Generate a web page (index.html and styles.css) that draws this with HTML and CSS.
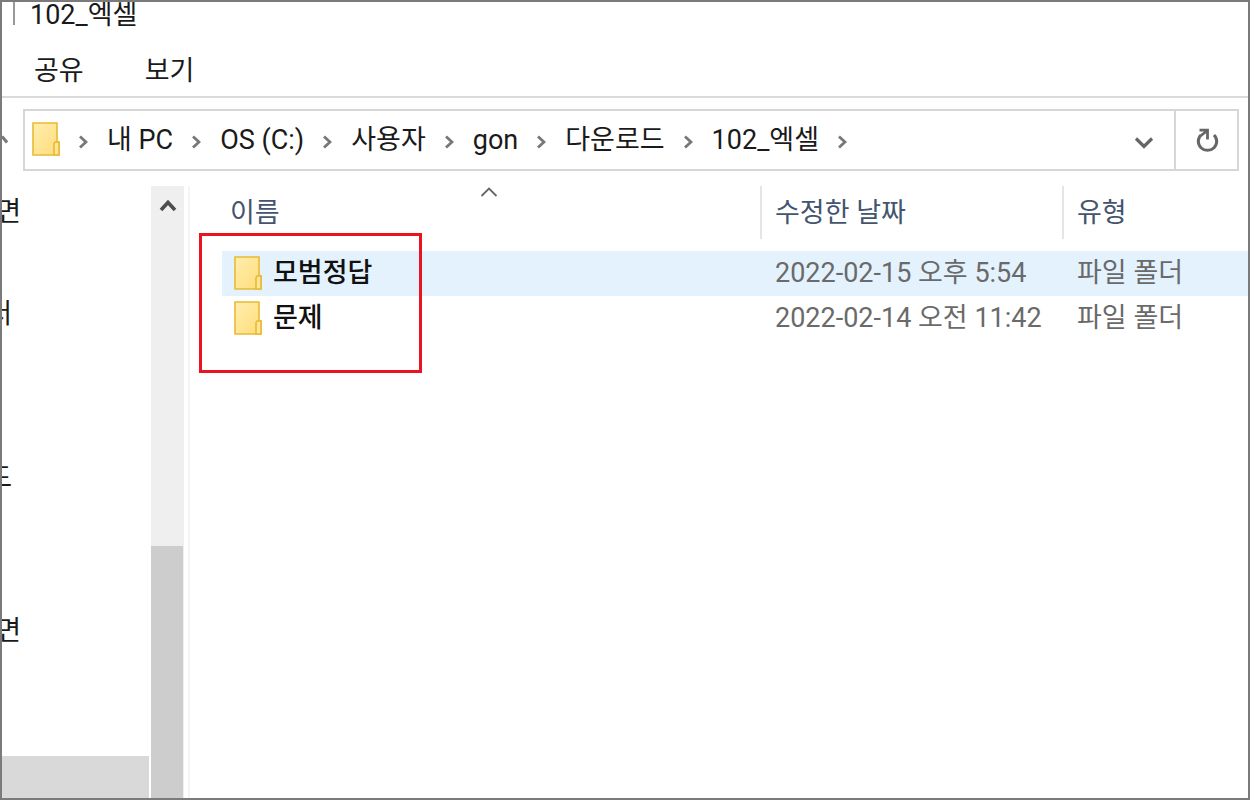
FILE: index.html
```
<!DOCTYPE html>
<html lang="ko">
<head>
<meta charset="utf-8">
<title>102_엑셀</title>
<link rel="stylesheet" href="styles.css">
</head>
<body>
<svg class="defs" width="0" height="0" aria-hidden="true">
  <defs>
    <linearGradient id="paper" x1="0" y1="0" x2="1" y2="1">
      <stop offset="0" stop-color="#ffeeb0"/>
      <stop offset="1" stop-color="#ffdc79"/>
    </linearGradient>
    <symbol id="folder" viewBox="0 0 28 34">
      <path d="M1 1H25V20H27V33H1Z" fill="url(#paper)" stroke="#e8bb35" stroke-width="1.6"/>
      <path d="M25 20H23L22 22V33H27V20Z" fill="#ffe594" stroke="#e8bb35" stroke-width="1.6"/>
    </symbol>
    <symbol id="next" viewBox="0 0 10 14">
      <path d="M2 1.5L8 7L2 12.5" fill="none" stroke="#777" stroke-width="2.8"/>
    </symbol>
  </defs>
</svg>
<main class="window">
  <header class="titlebar"><span class="title">102_엑셀</span></header>
  <nav class="tabs">
    <button type="button">공유</button>
    <button type="button">보기</button>
  </nav>
  <div class="location">
    <svg class="recent" width="6" height="12" viewBox="0 0 6 12" aria-hidden="true"><path d="M0 2.5L5 8.5" fill="none" stroke="#777" stroke-width="3"/></svg>
    <div class="address">
      <nav class="crumbs" aria-label="경로">
        <svg class="folder" aria-hidden="true"><use href="#folder"/></svg>
        <svg class="next" aria-hidden="true"><use href="#next"/></svg>
        <button type="button">내 PC</button>
        <svg class="next" aria-hidden="true"><use href="#next"/></svg>
        <button type="button">OS (C:)</button>
        <svg class="next" aria-hidden="true"><use href="#next"/></svg>
        <button type="button">사용자</button>
        <svg class="next" aria-hidden="true"><use href="#next"/></svg>
        <button type="button">gon</button>
        <svg class="next" aria-hidden="true"><use href="#next"/></svg>
        <button type="button">다운로드</button>
        <svg class="next" aria-hidden="true"><use href="#next"/></svg>
        <button type="button">102_엑셀</button>
        <svg class="next" aria-hidden="true"><use href="#next"/></svg>
      </nav>
      <button type="button" class="history" aria-label="이전 위치">
        <svg width="20" height="14" viewBox="0 0 20 14"><path d="M2 2.5L10 10.5L18 2.5" fill="none" stroke="#666" stroke-width="3.2"/></svg>
      </button>
      <button type="button" class="refresh" aria-label="새로 고침">
        <svg width="24" height="26" viewBox="0 0 24 26"><path d="M19 8A9.200 9 0 1 1 6 8" fill="none" stroke="#666" stroke-width="3"/><path d="M4.500 3.200H12.500V12.500M12.500 3.500L6 8.500" fill="none" stroke="#666" stroke-width="2.800"/></svg>
      </button>
    </div>
  </div>
  <div class="body">
    <aside class="tree">
      <ul>
        <li>면</li>
        <li class="skip-one">서</li>
        <li class="skip-group">드</li>
        <li class="skip-two">면</li>
        <li class="skip-two selected"></li>
      </ul>
    </aside>
    <div class="scrollbar">
      <button type="button" aria-label="위로 스크롤">
        <svg width="18" height="14" viewBox="0 0 18 14"><path d="M2 12L9 4.500L16 12" fill="none" stroke="#4d4d4d" stroke-width="3.600"/></svg>
      </button>
      <div class="thumb"></div>
    </div>
    <section class="files">
      <table>
        <colgroup><col class="col-name"><col class="col-date"><col></colgroup>
        <thead>
          <tr>
            <th scope="col"><div class="head">이름<svg class="sort" width="18" height="12" viewBox="0 0 18 12" aria-hidden="true"><path d="M1.500 10L9 2.500L16.500 10" fill="none" stroke="#666" stroke-width="1.800"/></svg></div></th>
            <th scope="col"><div class="head divided">수정한 날짜</div></th>
            <th scope="col"><div class="head divided">유형</div></th>
          </tr>
        </thead>
        <tbody>
          <tr class="hover">
            <td class="name"><div class="entry"><svg class="folder" aria-hidden="true"><use href="#folder"/></svg>모범정답</div></td>
            <td>2022-02-15 오후 5:54</td>
            <td>파일 폴더</td>
          </tr>
          <tr>
            <td class="name"><div class="entry"><svg class="folder" aria-hidden="true"><use href="#folder"/></svg>문제</div></td>
            <td>2022-02-14 오전 11:42</td>
            <td>파일 폴더</td>
          </tr>
        </tbody>
      </table>
      <div class="highlight"></div>
    </section>
  </div>
</main>
</body>
</html>
```
FILE: styles.css
```
* { box-sizing: border-box; }
body {
  margin: 0;
  background: #fff;
  color: #1a1a1a;
  font: 27px/32px Roboto, "Noto Sans CJK KR", sans-serif;
}
button {
  padding: 0;
  border: 0;
  background: none;
  color: inherit;
  font: inherit;
  white-space: nowrap;
}
svg { display: block; flex: none; }
ul { margin: 0; padding: 0; list-style: none; }
.defs { position: absolute; }
.window {
  display: flex;
  flex-direction: column;
  height: 100vh;
  overflow: hidden;
  border: 2px solid #7b7b7b;
}
.titlebar {
  display: flex;
  align-items: flex-start;
  height: 26px;
  padding-left: 11px;
}
.title {
  height: 23px;
  padding-left: 15px;
  border-left: 2px solid #999;
  line-height: 26px;
}
.tabs {
  display: flex;
  gap: 61px;
  height: 70px;
  padding: 27px 32px 0;
  border-bottom: 2px solid #d9dadb;
}
.tabs button { height: 32px; }
.location {
  display: flex;
  align-items: center;
  gap: 15px;
  padding: 11px 9px 0 0;
}
.address {
  display: flex;
  flex: 1;
  height: 62px;
  border: 2px solid #d6d6d6;
}
.crumbs {
  display: flex;
  flex: 1;
  align-items: center;
  gap: 18px;
  padding-left: 7px;
}
.folder { width: 28px; height: 34px; }
.crumbs .folder { margin-bottom: 2px; }
.next { width: 10px; height: 14px; margin: 3px 1px 0 0; }
.history {
  display: grid;
  place-items: center;
  width: 60px;
  padding-top: 5px;
}
.refresh {
  display: grid;
  place-items: center;
  width: 63px;
  border-left: 2px solid #d6d6d6;
}
.body {
  display: flex;
  flex: 1;
  min-height: 0;
  padding-top: 15px;
}
.tree { width: 147px; overflow: hidden; }
.tree ul { margin-top: -2px; }
.tree li {
  display: flex;
  align-items: center;
  justify-content: flex-end;
  width: 19px;
  height: 51px;
  padding-top: 4px;
}
.tree .skip-one { width: 10px; margin-top: 51px; }
.tree .skip-group { width: 10px; margin-top: 113px; }
.tree .skip-two { margin-top: 102px; }
.tree .selected {
  width: 100%;
  background: #d9d9d9;
}
.scrollbar {
  display: flex;
  flex-direction: column;
  justify-content: space-between;
  width: 33px;
  margin-left: 2px;
  background: #efefef;
}
.scrollbar button {
  display: grid;
  place-items: center;
  height: 38px;
}
.thumb {
  height: 252px;
  margin-right: 1px;
  background: #cdcdcd;
}
.files {
  position: relative;
  flex: 1;
  margin-left: 4px;
  padding-left: 32px;
  border-left: 2px solid #f5f5f5;
}
table {
  width: 100%;
  table-layout: fixed;
  border-collapse: collapse;
}
.col-name { width: 538px; }
.col-date { width: 302px; }
th, td {
  padding: 0;
  text-align: left;
  font-weight: 400;
  white-space: nowrap;
}
th { padding-bottom: 12px; color: #44546f; }
.head {
  position: relative;
  display: flex;
  align-items: center;
  height: 53px;
  padding-left: 8px;
}
.divided { padding-left: 13px; border-left: 2px solid #e5e5e5; }
.sort {
  position: absolute;
  top: 0;
  left: 48%;
}
td {
  height: 45px;
  padding: 0 0 1px 15px;
  color: #6a6a6a;
}
.name { padding: 0 0 2px 12px; color: #111; }
.entry { display: flex; align-items: center; gap: 11px; font-weight: 500; }
.hover { background: #e4f2fe; }
.highlight {
  position: absolute;
  top: 47px;
  left: 9px;
  width: 223px;
  height: 140px;
  border: 3px solid #e8141f;
}
```
